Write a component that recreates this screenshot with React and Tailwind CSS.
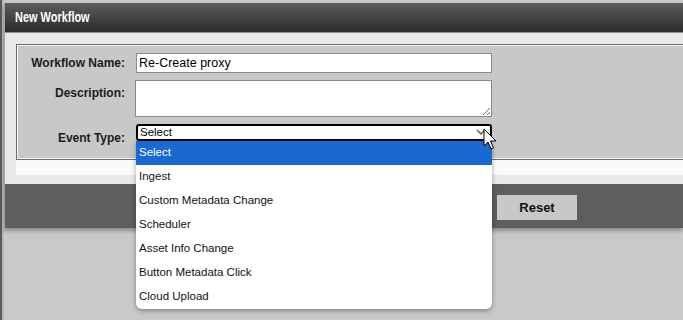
import React from 'react';

const options = [
  'Select',
  'Ingest',
  'Custom Metadata Change',
  'Scheduler',
  'Asset Info Change',
  'Button Metadata Click',
  'Cloud Upload',
];

const font = { fontFamily: '"Liberation Sans", Arial, sans-serif' };

const App = () => {
  return (
    <div
      className="relative flex w-[683px] h-[320px] overflow-hidden bg-[#c9c9c9]"
      style={font}
    >
      {/* strip of the page behind, at the left */}
      <div className="flex w-[4px] shrink-0">
        <div className="w-[2px] bg-[#5a5a5a]" />
        <div className="w-[2px] bg-[#b8b8b8]" />
      </div>

      {/* dialog */}
      <div className="mt-[3px] flex-1 min-w-0 self-start border-l border-[#a3a3a3] shadow-[0_3px_4px_rgba(0,0,0,0.3)]">
        {/* title bar */}
        <div className="h-[30px] flex items-center pl-[10px] bg-gradient-to-b from-[#5d5d5d] to-[#2b2b2b] border-b border-[#8c8c8c]">
          <span className="inline-block origin-left scale-x-[0.73] text-[15px] font-bold text-white">
            New Workflow
          </span>
        </div>

        {/* content */}
        <div className="bg-[#e8e8e8] pl-[11px] pt-[11px] pb-[9px]">
          <div className="mr-[-20px] border border-[#6e6e6e] bg-[#c8c8c8] shadow-[inset_1px_1px_0_#f2f2f2,inset_-1px_-1px_0_#f2f2f2] pt-[8px] pb-[18px]">
            <div className="flex flex-col gap-[7px]">
              {/* Workflow Name */}
              <div className="flex items-center gap-[11px]">
                <label className="w-[108px] text-right text-[12px] font-bold text-[#1c1c1c]">
                  Workflow Name:
                </label>
                <input
                  type="text"
                  defaultValue="Re-Create proxy"
                  className="w-[356px] h-[20px] border border-[#8a8a8a] bg-white px-[2px] text-[12.5px] text-black outline-none"
                  style={font}
                />
              </div>

              {/* Description */}
              <div className="flex items-start gap-[10px]">
                <label className="w-[108px] pt-[4px] text-right text-[12px] font-bold text-[#1c1c1c]">
                  Description:
                </label>
                <textarea
                  className="block w-[357px] h-[37px] border border-[#8a8a8a] bg-white outline-none"
                  style={font}
                />
              </div>

              {/* Event Type */}
              <div className="h-[17px] flex items-start gap-[11px]">
                <label className="w-[108px] pt-[5px] text-right text-[12px] font-bold text-[#1c1c1c]">
                  Event Type:
                </label>
                <div className="relative">
                  <div className="w-[356px] h-[17px] flex items-center justify-between rounded-[3px] border-2 border-black bg-white pl-[2px] pr-[4px] text-[11.5px] text-black">
                    <span>Select</span>
                    <svg width="10" height="7" viewBox="0 0 10 7">
                      <path d="M1 1 L5 5 L9 1" fill="none" stroke="#5a5a5a" strokeWidth="1.5" />
                    </svg>
                  </div>

                  {/* open option list */}
                  <div className="absolute left-0 top-[17px] z-10 w-[356px] rounded-b-[6px] bg-white shadow-[0_2px_5px_rgba(0,0,0,0.35)] overflow-hidden">
                    {options.map((opt, i) => (
                      <div
                        key={opt}
                        className={
                          i === 0
                            ? 'h-[24px] flex items-center pl-[3px] text-[11.5px] bg-[#1a69d2] text-white'
                            : 'h-[24px] flex items-center pl-[3px] text-[11.5px] text-[#111]'
                        }
                      >
                        {opt}
                      </div>
                    ))}
                  </div>

                  {/* mouse cursor */}
                  <svg
                    className="absolute left-[347px] top-[4px] z-20"
                    width="14"
                    height="23"
                    viewBox="0 0 14 23"
                  >
                    <path
                      d="M1 1 L1 18 L5 14 L8 21 L10.5 20 L7.5 13 L13 13 Z"
                      fill="white"
                      stroke="black"
                      strokeWidth="1"
                      strokeLinejoin="round"
                    />
                  </svg>
                </div>
              </div>
            </div>
          </div>
          <div className="h-[15px] mr-[-20px] bg-[#fafafa]" />
        </div>

        {/* footer */}
        <div className="h-[44px] bg-[#5e5e5e] pl-[492px] pt-[11px]">
          <button className="w-[80px] h-[25px] bg-[#c8c8c8] text-[13px] font-bold text-[#111]" style={font}>
            Reset
          </button>
        </div>
      </div>
    </div>
  );
};

export default App;
